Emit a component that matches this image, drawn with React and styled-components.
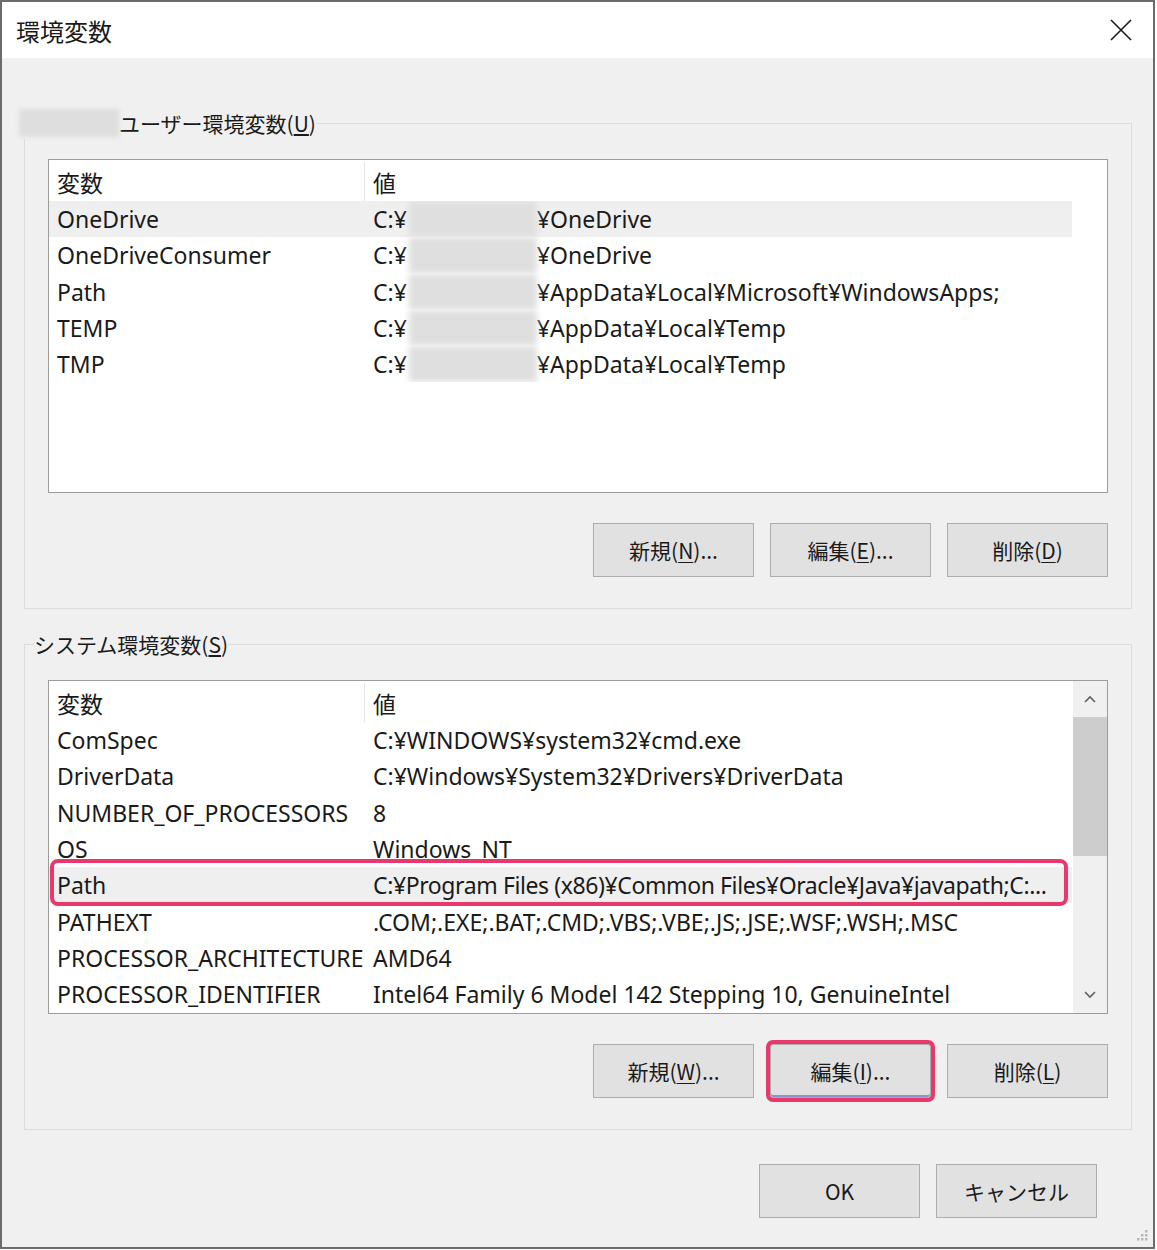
import styled, { createGlobalStyle } from "styled-components";

const GlobalStyle = createGlobalStyle`
  body {
    margin: 0;
    background: #ffffff;
  }
`

const Ventana = styled.div`
  box-sizing: border-box;
  position: relative;
  width: 1155px;
  height: 1249px;
  border: 2px solid #6b6b6b;
  background: #f0f0f0;
  display: flex;
  flex-direction: column;
  font-family: "Noto Sans", "Noto Sans CJK JP", sans-serif;
  color: #1a1a1a;
`

const BarraTitulo = styled.div`
  height: 56px;
  background: #ffffff;
  display: flex;
  align-items: center;
  justify-content: space-between;
  padding: 0 20px 0 14px;
`

const Titulo = styled.div`
  font-family: "Noto Sans CJK JP", sans-serif;
  font-size: 24px;
`

const BotonCerrar = styled.svg`
  width: 24px;
  height: 24px;
`

const Contenido = styled.div`
  display: flex;
  flex-direction: column;
  padding: 49px 21px 0 22px;
`

const Grupo = styled.fieldset`
  margin: ${props => props.$margen || "0"};
  padding: 0 23px 31px 23px;
  border: 1px solid #dcdcdc;
  min-inline-size: 0;
`

const Leyenda = styled.legend`
  padding: 0;
  margin-left: ${props => props.$desplazamiento}px;
  font-family: "Noto Sans CJK JP", sans-serif;
  font-size: 21px;
  line-height: 32px;
  display: flex;
  align-items: center;
`

const NombreBorroso = styled.span`
  display: inline-block;
  width: 100px;
  height: 28px;
  background: #dedede;
  filter: blur(2px);
`

const Lista = styled.div`
  box-sizing: border-box;
  margin-top: 20px;
  height: 334px;
  border: 1px solid #9c9c9c;
  background: #ffffff;
  display: flex;
  overflow: hidden;
`

const Tabla = styled.div`
  flex: 1;
  min-width: 0;
  overflow: hidden;
`

const Encabezado = styled.div`
  display: flex;
  width: 1023px;
  height: 41px;
  padding-top: 2px;
  box-sizing: border-box;
`

const CeldaEncabezado = styled.div`
  width: ${props => props.$ancho}px;
  flex-shrink: 0;
  box-sizing: border-box;
  padding-left: 8px;
  display: flex;
  align-items: center;
  font-family: "Noto Sans CJK JP", sans-serif;
  font-size: 23px;
  border-right: ${props => props.$divisor ? "1px solid #e5e5e5" : "none"};
`

const Fila = styled.div`
  position: relative;
  display: flex;
  width: 1023px;
  height: 36.3px;
  background: ${props => props.$seleccionada ? "#efefef" : "transparent"};

  &::after {
    content: "";
    display: ${props => props.$marcada ? "block" : "none"};
    position: absolute;
    top: -8px;
    bottom: -3px;
    left: 1px;
    right: 4px;
    border: 4px solid #e8386c;
    border-radius: 8px;
  }
`

const Celda = styled.div`
  width: ${props => props.$ancho}px;
  flex-shrink: 0;
  box-sizing: border-box;
  padding: 0 8px;
  display: flex;
  align-items: center;
  font-size: 23px;
  white-space: nowrap;
  overflow: hidden;
`

const TextoValor = styled.span`
  white-space: nowrap;
  display: block;
  letter-spacing: ${props => props.$apretado ? "-0.4px" : "normal"};
`

const Borroso = styled.span`
  display: inline-block;
  width: 128px;
  height: 36.3px;
  margin-left: 2px;
  vertical-align: middle;
  background: #dfdfdf;
  filter: blur(3px);
`

const BarraDesplazamiento = styled.div`
  width: 34px;
  flex-shrink: 0;
  background: #f0f0f0;
  display: flex;
  flex-direction: column;
`

const Flecha = styled.div`
  height: 36px;
  display: flex;
  align-items: center;
  justify-content: center;
  flex-shrink: 0;
`

const Pulgar = styled.div`
  height: 139px;
  background: #cdcdcd;
`

const Relleno = styled.div`
  flex: 1;
`

const FilaBotones = styled.div`
  display: flex;
  justify-content: flex-end;
  gap: 16px;
  margin-top: ${props => props.$margen || "30px"};
  padding-right: ${props => props.$derecha || "0"};
`

const Boton = styled.button`
  box-sizing: border-box;
  width: 161px;
  height: 54px;
  background: #e1e1e1;
  border: 1px solid #adadad;
  border-radius: ${props => props.$marcado ? "3px" : "0"};
  box-shadow: ${props => props.$marcado ? "0 0 0 4px #e8386c, inset 0 -2px 0 #8c93cf" : "none"};
  font-family: "Noto Sans CJK JP", "Noto Sans", sans-serif;
  font-size: 21px;
  color: #1a1a1a;
  padding: 0;
  cursor: pointer;

  u {
    text-decoration-thickness: 1px;
    text-underline-offset: 3px;
  }
`

const Agarre = styled.svg`
  position: absolute;
  right: 4px;
  bottom: 3px;
  width: 16px;
  height: 16px;
`

const filasUsuario = [
  ["OneDrive", "¥OneDrive"],
  ["OneDriveConsumer", "¥OneDrive"],
  ["Path", "¥AppData¥Local¥Microsoft¥WindowsApps;"],
  ["TEMP", "¥AppData¥Local¥Temp"],
  ["TMP", "¥AppData¥Local¥Temp"],
]

const filasSistema = [
  ["ComSpec", "C:¥WINDOWS¥system32¥cmd.exe"],
  ["DriverData", "C:¥Windows¥System32¥Drivers¥DriverData"],
  ["NUMBER_OF_PROCESSORS", "8"],
  ["OS", "Windows_NT"],
  ["Path", "C:¥Program Files (x86)¥Common Files¥Oracle¥Java¥javapath;C:..."],
  ["PATHEXT", ".COM;.EXE;.BAT;.CMD;.VBS;.VBE;.JS;.JSE;.WSF;.WSH;.MSC"],
  ["PROCESSOR_ARCHITECTURE", "AMD64"],
  ["PROCESSOR_IDENTIFIER", "Intel64 Family 6 Model 142 Stepping 10, GenuineIntel"],
]

const Chevron = ({ arriba }) => (
  <svg width="12" height="8" viewBox="0 0 12 8">
    <polyline
      points={arriba ? "1,7 6,2 11,7" : "1,1 6,6 11,1"}
      fill="none"
      stroke="#606060"
      strokeWidth="1.6"
    />
  </svg>
)

const Encabezados = () => (
  <Encabezado>
    <CeldaEncabezado $ancho={316} $divisor>変数</CeldaEncabezado>
    <CeldaEncabezado $ancho={707}>値</CeldaEncabezado>
  </Encabezado>
)

const App = () => {
  return (
    <Ventana>
      <GlobalStyle />
      <BarraTitulo>
        <Titulo>環境変数</Titulo>
        <BotonCerrar viewBox="0 0 24 24">
          <path d="M2 2 L22 22 M22 2 L2 22" stroke="#1a1a1a" strokeWidth="1.6" fill="none" />
        </BotonCerrar>
      </BarraTitulo>

      <Contenido>
        <Grupo>
          <Leyenda $desplazamiento={-29}>
            <NombreBorroso />ユーザー環境変数(<u>U</u>)
          </Leyenda>
          <Lista>
            <Tabla>
              <Encabezados />
              {filasUsuario.map(([nombre, valor], i) => (
                <Fila key={nombre + i} $seleccionada={i === 0}>
                  <Celda $ancho={316}>{nombre}</Celda>
                  <Celda $ancho={707}>
                    C:¥<Borroso />{valor}
                  </Celda>
                </Fila>
              ))}
            </Tabla>
          </Lista>
          <FilaBotones>
            <Boton>新規(<u>N</u>)...</Boton>
            <Boton>編集(<u>E</u>)...</Boton>
            <Boton>削除(<u>D</u>)</Boton>
          </FilaBotones>
        </Grupo>

        <Grupo $margen="19px 0 0 0">
          <Leyenda $desplazamiento={-14}>システム環境変数(<u>S</u>)</Leyenda>
          <Lista>
            <Tabla>
              <Encabezados />
              {filasSistema.map(([nombre, valor]) => (
                <Fila key={nombre} $seleccionada={nombre === "Path"} $marcada={nombre === "Path"}>
                  <Celda $ancho={316}>{nombre}</Celda>
                  <Celda $ancho={703}>
                    <TextoValor $apretado={nombre === "Path"}>{valor}</TextoValor>
                  </Celda>
                </Fila>
              ))}
            </Tabla>
            <BarraDesplazamiento>
              <Flecha><Chevron arriba /></Flecha>
              <Pulgar />
              <Relleno />
              <Flecha><Chevron /></Flecha>
            </BarraDesplazamiento>
          </Lista>
          <FilaBotones>
            <Boton>新規(<u>W</u>)...</Boton>
            <Boton $marcado>編集(<u>I</u>)...</Boton>
            <Boton>削除(<u>L</u>)</Boton>
          </FilaBotones>
        </Grupo>

        <FilaBotones $margen="34px" $derecha="35px">
          <Boton>OK</Boton>
          <Boton>キャンセル</Boton>
        </FilaBotones>
      </Contenido>

      <Agarre viewBox="0 0 16 16">
        {[[12, 2], [8, 6], [12, 6], [4, 10], [8, 10], [12, 10]].map(([x, y]) => (
          <rect key={x + "-" + y} x={x} y={y} width="2.5" height="2.5" fill="#b8b8b8" />
        ))}
      </Agarre>
    </Ventana>
  )
}

export default App
